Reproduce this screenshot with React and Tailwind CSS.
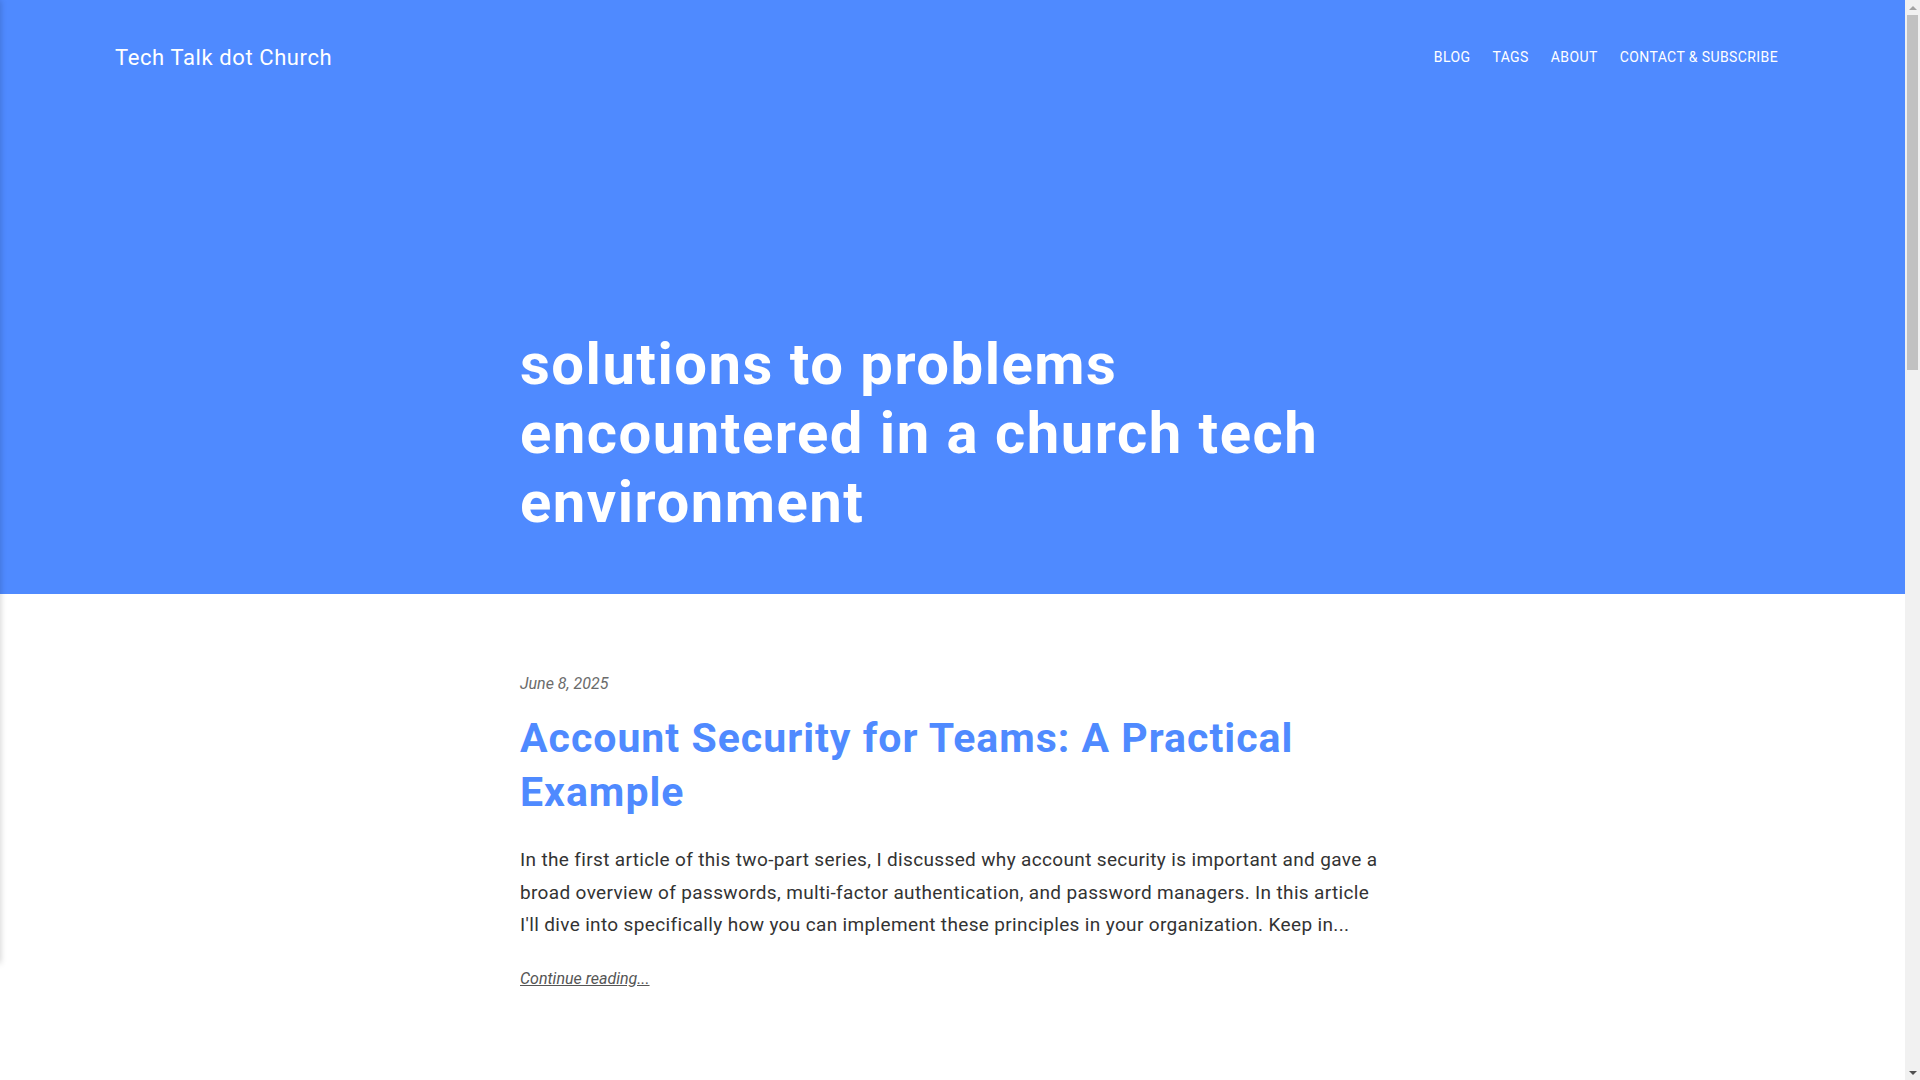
import React from "react";

const posts = [
  {
    date: "June 8, 2025",
    title: "Account Security for Teams: A Practical Example",
    excerpt:
      "In the first article of this two-part series, I discussed why account security is important and gave a broad overview of passwords, multi-factor authentication, and password managers. In this article I'll dive into specifically how you can implement these principles in your organization. Keep in...",
  },
  {
    date: "May 25, 2025",
    title: "Account Security for Teams: Why It Matters",
    excerpt:
      "Every church tech team shares accounts: streaming platforms, social media, lighting consoles, and more. In this article I'll walk through why account security matters and the basic building blocks you need to know...",
  },
  {
    date: "April 13, 2025",
    title: "Building a Reliable Livestream Setup",
    excerpt:
      "A livestream that fails on Sunday morning is stressful for everyone. Here are the lessons we learned while rebuilding our streaming workflow from the ground up, including hardware, software, and redundancy...",
  },
  {
    date: "March 2, 2025",
    title: "Training Volunteers on the Sound Desk",
    excerpt:
      "Volunteers are the backbone of most church tech ministries. This post covers a simple training plan that helps new volunteers get comfortable running the sound desk in just a few weeks...",
  },
];

function Scrollbar() {
  return (
    <div className="fixed right-0 top-0 h-screen w-[15px] bg-[#f1f1f1] flex flex-col items-center">
      <div className="h-[15px] flex items-center justify-center">
        <div className="w-0 h-0 border-l-[4px] border-r-[4px] border-b-[4px] border-l-transparent border-r-transparent border-b-[#a3a3a3]" />
      </div>
      <div className="w-[11px] h-[355px] bg-[#c1c1c1]" />
      <div className="flex-1" />
      <div className="h-[15px] flex items-center justify-center">
        <div className="w-0 h-0 border-l-[4px] border-r-[4px] border-t-[4px] border-l-transparent border-r-transparent border-t-[#505050]" />
      </div>
    </div>
  );
}

export default function App() {
  return (
    <div
      className="min-h-[3200px] w-[1905px] bg-white text-[#333]"
      style={{ fontFamily: "Roboto, 'Liberation Sans', sans-serif" }}
    >
      <div className="fixed left-0 top-0 h-[963px] w-[4px] -translate-x-full shadow-[0_0_6px_rgba(0,0,0,0.25)]" />
      <Scrollbar />
      <header className="bg-[#4f8aff] text-white h-[594px] flex flex-col">
        <div className="flex items-center justify-between pl-[115px] pr-[127px] h-[115px]">
          <a className="text-[22px] tracking-[0.6px]">Tech Talk dot Church</a>
          <nav className="flex gap-[22px] text-[14px] tracking-[0.4px] uppercase">
            <a>Blog</a>
            <a>Tags</a>
            <a>About</a>
            <a>Contact &amp; Subscribe</a>
          </nav>
        </div>
        <div className="flex-1 flex items-end pb-[57px]">
          <div className="ml-[520px] w-[860px]">
            <h1 className="text-[58px] leading-[69px] font-bold tracking-[1.5px]">
              solutions to problems encountered in a church tech environment
            </h1>
          </div>
        </div>
      </header>
      <main className="ml-[520px] w-[860px] pt-[78px]">
        {posts.map((p) => (
          <article key={p.title} className="mb-[90px]">
            <div className="text-[16px] italic text-[#6b6b6b]">{p.date}</div>
            <h2 className="mt-[15px] text-[41px] leading-[54px] font-bold tracking-[1px] text-[#4f8aff]">
              {p.title}
            </h2>
            <p className="mt-[25px] text-[19px] leading-[32.6px] tracking-[0.35px] text-[#333]">
              {p.excerpt}
            </p>
            <a className="block mt-[25px] text-[16px] italic underline text-[#555]">
              Continue reading...
            </a>
          </article>
        ))}
      </main>
    </div>
  );
}
